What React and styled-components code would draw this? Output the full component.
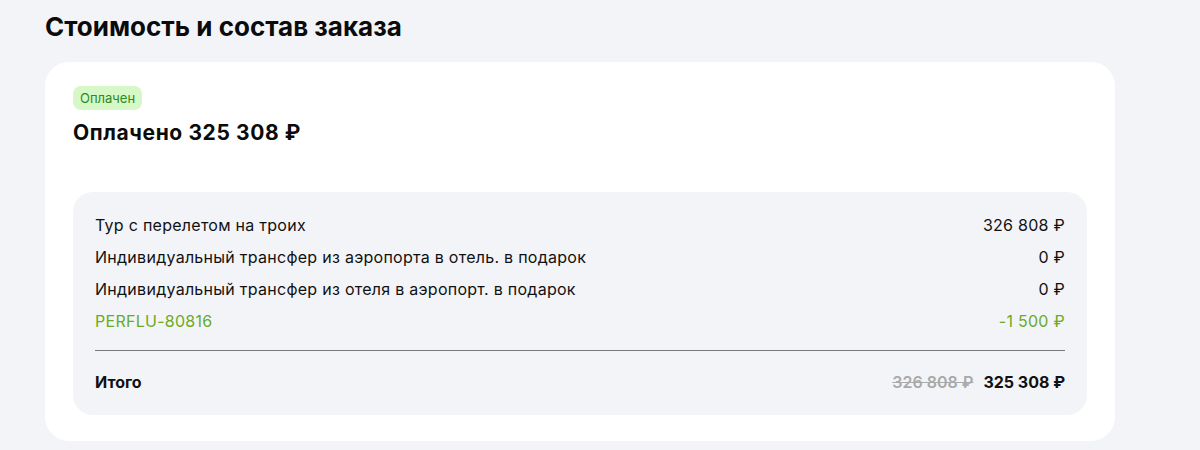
import React from 'react'
import styled, { createGlobalStyle } from 'styled-components'

const GlobalStyle = createGlobalStyle`
  html, body {
    margin: 0;
    padding: 0;
    background: #f3f4f8;
    font-family: Inter, "Noto Sans", "Liberation Sans", sans-serif;
    color: #0b0b0b;
  }
`

const Page = styled.div`
  width: 1070px;
  padding: 10px 0 0 45px;
`

const Title = styled.h2`
  margin: 0 0 18px;
  font-size: 26px;
  line-height: 34px;
  font-weight: 700;
  letter-spacing: 0;
`

const Card = styled.div`
  background: #fff;
  border-radius: 24px;
  padding: 24px 28px 26px;
  display: flex;
  flex-direction: column;
`

const Badge = styled.span`
  align-self: flex-start;
  height: 24px;
  line-height: 24px;
  padding: 0 7px;
  border-radius: 8px;
  background: #d6f8c6;
  color: #2e8a22;
  font-size: 13px;
`

const Paid = styled.div`
  margin-top: 9px;
  font-size: 21px;
  line-height: 28px;
  font-weight: 700;
  letter-spacing: 0.6px;
`

const Breakdown = styled.div`
  margin-top: 45px;
  background: #f3f4f8;
  border-radius: 20px;
  padding: 21px 22px 21px;
  display: flex;
  flex-direction: column;
  gap: 8px;
`

const Row = styled.div`
  display: flex;
  justify-content: space-between;
  align-items: center;
  font-size: 16px;
  line-height: 24px;
  letter-spacing: 0.27px;
  color: ${(p) => (p.$promo ? '#6aab1f' : '#111')};
`

const Divider = styled.hr`
  margin: 9px 0 11px;
  border: 0;
  border-top: 1.5px solid #7a7a7a;
`

const Total = styled(Row)`
  font-weight: 700;
  letter-spacing: 0;
`

const Prices = styled.span`
  display: flex;
  gap: 10px;
`

const OldPrice = styled.span`
  color: #a9a9a9;
  text-decoration: line-through;
  font-weight: 600;
`

const items = [
  { name: 'Тур с перелетом на троих', price: '326 808 ₽' },
  { name: 'Индивидуальный трансфер из аэропорта в отель. в подарок', price: '0 ₽' },
  { name: 'Индивидуальный трансфер из отеля в аэропорт. в подарок', price: '0 ₽' },
  { name: 'PERFLU-80816', price: '-1 500 ₽', promo: true },
]

export default function App() {
  return (
    <>
      <GlobalStyle />
      <Page>
        <Title>Стоимость и состав заказа</Title>
        <Card>
          <Badge>Оплачен</Badge>
          <Paid>Оплачено 325 308 ₽</Paid>
          <Breakdown>
            {items.map((it) => (
              <Row key={it.name} $promo={it.promo}>
                <span>{it.name}</span>
                <span>{it.price}</span>
              </Row>
            ))}
            <Divider />
            <Total>
              <span>Итого</span>
              <Prices>
                <OldPrice>326 808 ₽</OldPrice>
                <span>325 308 ₽</span>
              </Prices>
            </Total>
          </Breakdown>
        </Card>
      </Page>
    </>
  )
}
